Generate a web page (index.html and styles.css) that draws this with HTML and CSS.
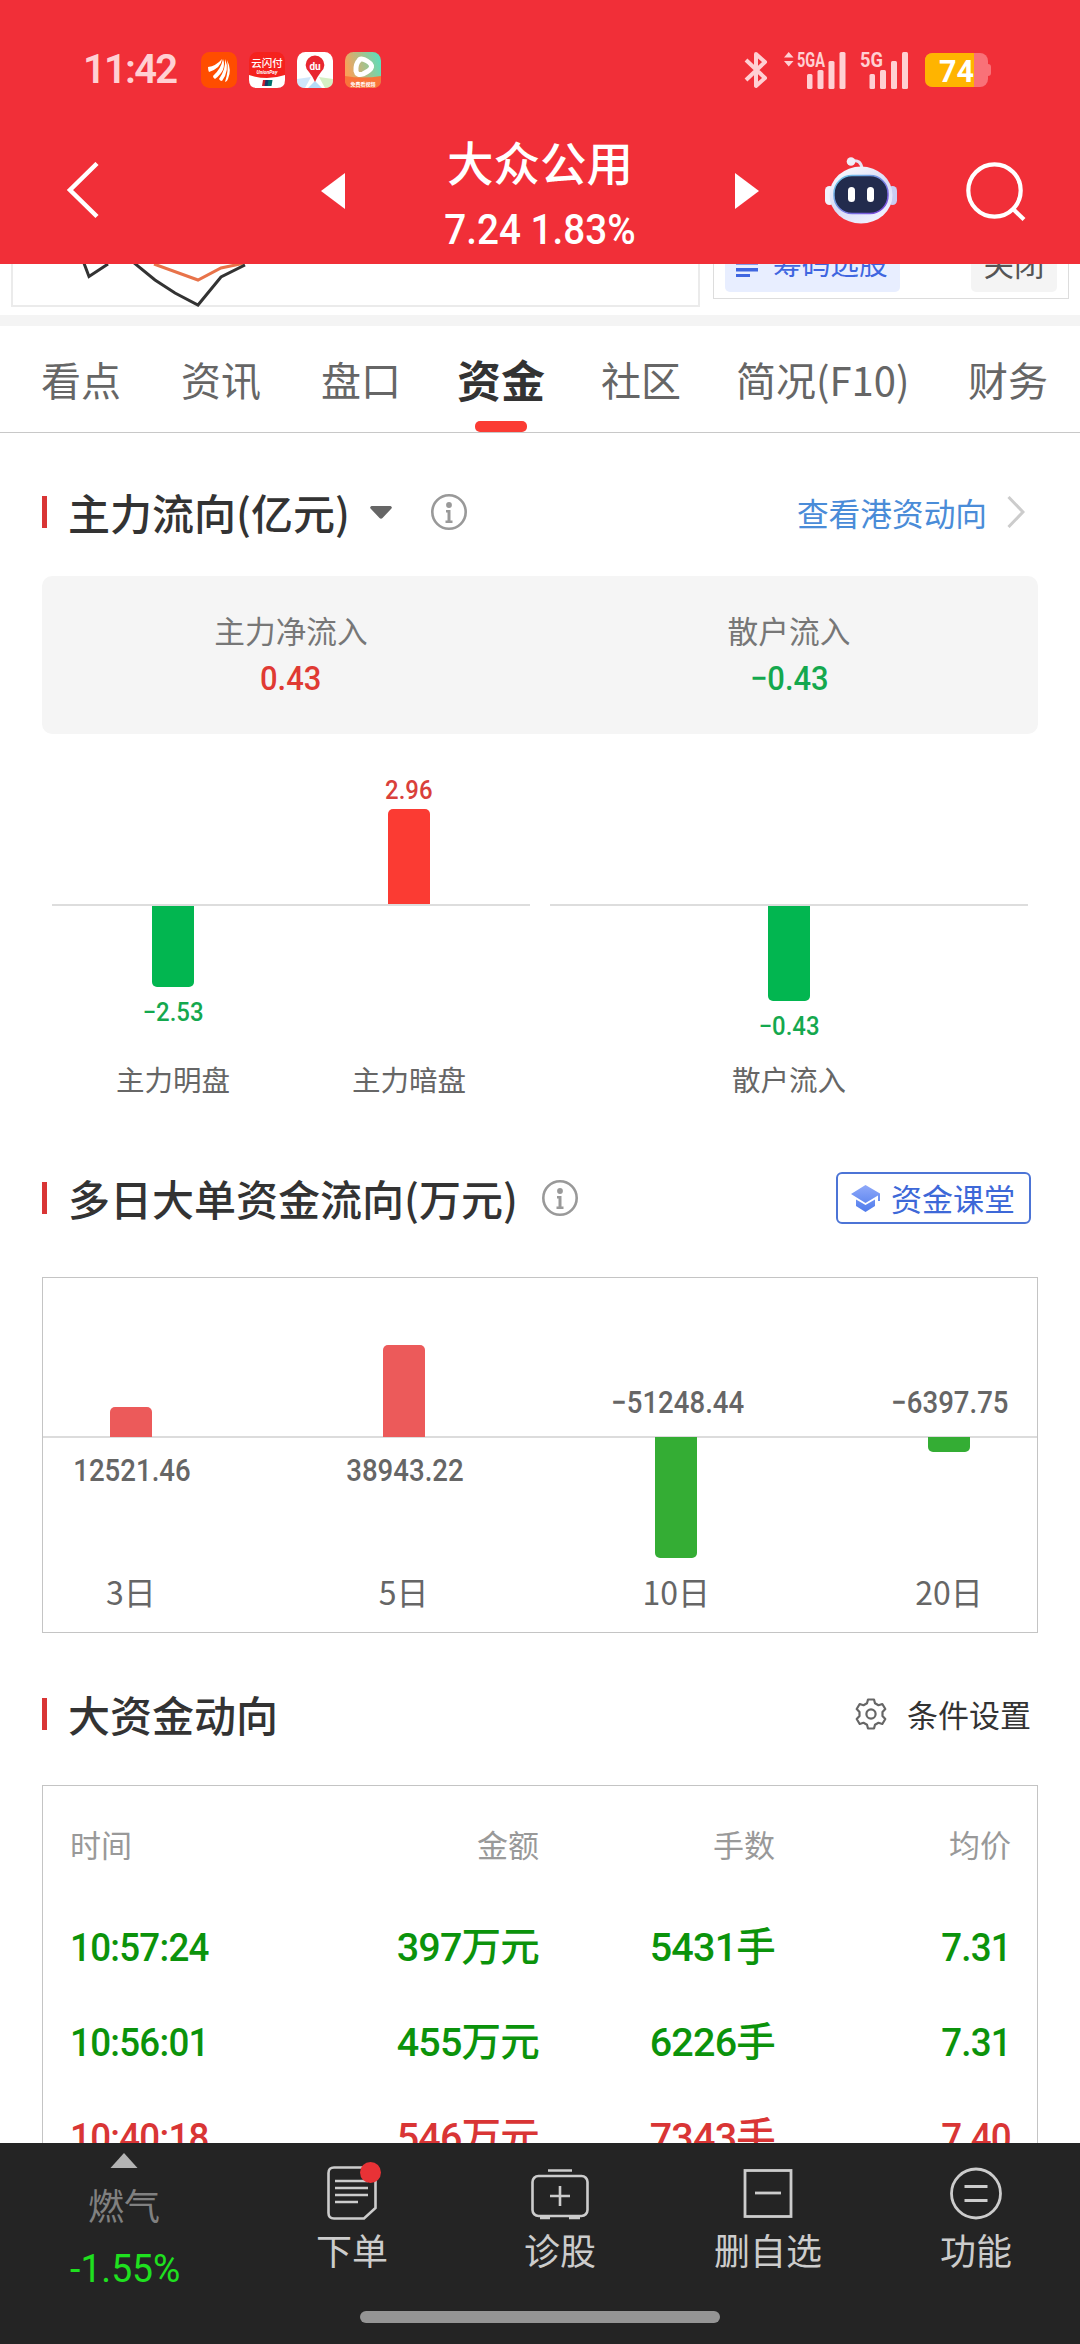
FILE: index.html
```html
<!DOCTYPE html>
<html lang="zh-CN">
<head>
<meta charset="utf-8">
<title>大众公用 - 资金</title>
<link rel="stylesheet" href="styles.css">
</head>
<body>
<div class="app">
  <header class="header">
    <div class="status">
      <span class="clock">11:42</span>
      <div class="apps">
        <svg width="36" height="36" viewBox="0 0 36 36"><rect width="36" height="36" rx="8.5" fill="#ff4d00"/><g fill="#fff"><path d="M7 15Q15 14 21 7Q20 16 8 20Q7 18 7 15Z"/><path d="M12 24Q20 17 22 7Q26 18 14 27Q12 26 12 24Z"/><path d="M18 27Q25 17 24 7Q29 18 21 29Q19 29 18 27Z"/><path d="M24 30Q28 18 26 8Q31 18 27 27Q26 30 24 30Z"/></g></svg>
        <svg width="36" height="36" viewBox="0 0 36 36"><rect width="36" height="36" rx="8.5" fill="#f5221e"/><path d="M0 23Q18 29 36 23V28Q36 36 28 36H8Q0 36 0 28Z" fill="#fff"/><text x="18" y="15" class="t-union">云闪付</text><text x="18" y="22" class="t-pay">UnionPay</text><path d="M14 28h4l-1 6h-4z" fill="#c8202f"/><path d="M16.500 28h4l-1 6h-4z" fill="#123a6b"/><path d="M19.500 28h4l-1 6h-4z" fill="#00706b"/></svg>
        <svg width="36" height="36" viewBox="0 0 36 36"><rect width="36" height="36" rx="8.500" fill="#fff"/><path d="M0 27L14 25L8 36Q0 36 0 28Z" fill="#cfe6fb"/><path d="M36 27L22 25L28 36Q36 36 36 28Z" fill="#d5efc4"/><path d="M18 29L25 36H11Z" fill="#b5dcf8"/><path d="M18 30Q16 25 12 20A9.300 9.300 0 1 1 24 20Q20 25 18 30Z" fill="#e8262f"/><text x="18" y="18" class="t-du">du</text></svg>
        <svg width="36" height="36" viewBox="0 0 36 36"><defs><linearGradient id="vid" x1="0" y1="0.300" x2="1" y2="0"><stop offset="0" stop-color="#f7a25a"/><stop offset=".9" stop-color="#62dcb8"/></linearGradient></defs><rect width="36" height="36" rx="8.500" fill="url(#vid)"/><path d="M0 24Q18 27 36 24V28Q36 36 28 36H8Q0 36 0 28Z" fill="#f9743a"/><path d="M14 8.500Q15 6 19 7.500Q27 11 26.500 15Q26 18 18 22Q12 24 11 19Q10.500 12 14 8.500Z" fill="none" stroke="#fff" stroke-width="5" stroke-linejoin="round"/><text x="18" y="34" class="t-free">免费看视频</text></svg>
      </div>
      <div class="signals">
        <svg width="24" height="38" viewBox="0 0 24 38" fill="none" stroke="#ffd0d3" stroke-width="4" stroke-linejoin="round"><path d="M2 9L21 27L12 35V3L21 11L2 29"/></svg>
        <svg class="net-a" width="63" height="38" viewBox="0 0 63 38" fill="#ffd0d3"><path d="M4.700 1L9.500 6.500H0ZM4.700 15.500L0 10H9.500Z"/><text x="13" y="16" textLength="28" lengthAdjust="spacingAndGlyphs" class="t-net">5GA</text><rect x="23" y="23" width="5.500" height="15" rx="1.500"/><rect x="33.500" y="19" width="6" height="19" rx="1.500"/><rect x="44.500" y="10" width="6" height="28" rx="1.500"/><rect x="55.500" y="1" width="6" height="37" rx="1.500"/></svg>
        <svg class="net-b" width="49" height="38" viewBox="0 0 49 38" fill="#ffd0d3"><text x="0" y="16" textLength="23" lengthAdjust="spacingAndGlyphs" class="t-net">5G</text><rect x="9.500" y="23" width="5.500" height="15" rx="1.500"/><rect x="20" y="19" width="6" height="19" rx="1.500"/><rect x="31" y="10" width="6" height="28" rx="1.500"/><rect x="42" y="1" width="6" height="37" rx="1.500"/></svg>
        <svg class="battery" width="67" height="36" viewBox="0 0 67 36"><rect x="0" y="1" width="63" height="34" rx="8" fill="#f97178"/><path d="M63 12q3 0 3 3v6q0 3-3 3z" fill="#f97178"/><path d="M49 1H8Q0 1 0 9V27Q0 35 8 35H49Z" fill="#ffb400"/><text x="14" y="29.500" textLength="35" lengthAdjust="spacingAndGlyphs" class="t-bat">74</text></svg>
      </div>
    </div>
    <div class="titlebar">
      <svg width="34" height="58" viewBox="0 0 34 58"><path d="M31 1.500L4 28L31 54.500" fill="none" stroke="#fff" stroke-width="4.500"/></svg>
      <svg class="prev" width="24" height="36" viewBox="0 0 24 36"><path d="M24 0V36L0 18Z" fill="#fff"/></svg>
      <div class="stock">
        <h1 class="stock-name">大众公用</h1>
        <div class="stock-price"><span class="num narrow">7.24 1.83%</span></div>
      </div>
      <svg width="24" height="36" viewBox="0 0 24 36"><path d="M0 0V36L24 18Z" fill="#fff"/></svg>
      <svg class="robot" width="72" height="68" viewBox="0 0 72 68">
        <defs><linearGradient id="head" x1="0" y1="0" x2=".6" y2="1"><stop offset="0" stop-color="#fff"/><stop offset=".6" stop-color="#d9dbf5"/><stop offset="1" stop-color="#eef0ff"/></linearGradient><linearGradient id="rim" x1="0" y1="0" x2="1" y2="1"><stop offset="0" stop-color="#6fd0e8"/><stop offset="1" stop-color="#7a3ddb"/></linearGradient></defs>
        <path d="M27 4Q36 2 37 12" fill="none" stroke="#e6e2f2" stroke-width="3"/><circle cx="26" cy="4.500" r="4.300" fill="#f0eef8"/>
        <rect x="0" y="29" width="9" height="19" rx="4.500" fill="#f2f2fc"/><rect x="63" y="29" width="9" height="19" rx="4.500" fill="#c9cdf2"/>
        <ellipse cx="36" cy="38" rx="31.500" ry="28.500" fill="url(#head)"/>
        <rect x="9" y="18.500" width="54" height="38" rx="18" fill="#222b4d" stroke="url(#rim)" stroke-width="1.500"/>
        <rect x="23" y="30" width="7" height="15" rx="3.500" fill="#fff"/><rect x="42" y="30" width="7" height="15" rx="3.500" fill="#fff"/>
      </svg>
      <svg class="search" width="62" height="60" viewBox="0 0 62 60" fill="none" stroke="#fff" stroke-width="4.200"><circle cx="28.500" cy="29.500" r="26.200"/><path d="M47 48L58 58.500"/></svg>
    </div>
  </header>

  <main class="content">
    <section class="strip">
      <div class="mini-chart">
        <svg width="300" height="43" viewBox="13 0 300 43" fill="none" stroke-width="3"><path d="M154 0L198 16L221 4L240 0L250 -3" stroke="#e8734a"/><path d="M82 -6L89 12.500L108 0M133 -2L155 16L175 29L198 41L221 13L245 1" stroke="#333"/></svg>
      </div>
      <div class="chips">
        <span class="chip chip-blue"><svg width="22" height="15" viewBox="0 0 22 15" fill="#3f66e0"><rect width="22" height="3" opacity=".6"/><rect y="6" width="22" height="3.500"/><rect y="12" width="14" height="3"/></svg>筹码选股</span>
        <span class="chip chip-gray">关闭</span>
      </div>
    </section>

    <nav class="tabs">
      <span>看点</span><span>资讯</span><span>盘口</span><span class="active">资金</span><span>社区</span><span>简况(F10)</span><span>财务</span>
    </nav>

    <section>
      <div class="head head-main">
        <h2>主力流向(亿元)</h2>
        <svg class="caret" width="22" height="13" viewBox="0 0 22 13"><path d="M1.500 0H20.500Q23 1 21 3L12.500 12Q11 13.500 9.500 12L1 3Q-1 1 1.500 0Z" fill="#666"/></svg>
        <svg class="info info-far" width="36" height="36" viewBox="0 0 36 36"><circle cx="18" cy="18" r="16.700" fill="none" stroke="#999" stroke-width="2.600"/><circle cx="18" cy="11" r="2.900" fill="#999"/><path d="M15 16h4.500v10.500h2v2.500h-7v-2.500h2v-8H15z" fill="#999"/></svg>
        <a class="link">查看港资动向<svg width="18" height="32" viewBox="0 0 18 32"><path d="M1.500 1L16 16L1.500 31" fill="none" stroke="#ccc" stroke-width="3"/></svg></a>
      </div>
      <div class="summary">
        <div class="sum-cell"><span>主力净流入</span><b class="num red">0.43</b></div>
        <div class="sum-cell"><span>散户流入</span><b class="num green">−0.43</b></div>
      </div>
      <div class="flow">
        <div class="flow-group">
          <div class="flow-col">
            <div class="up"></div>
            <div class="down"><i class="bar" style="height:81px"></i><b class="num">−2.53</b></div>
            <span>主力明盘</span>
          </div>
          <div class="flow-col">
            <div class="up"><b class="num">2.96</b><i class="bar" style="height:95px"></i></div>
            <div class="down"></div>
            <span>主力暗盘</span>
          </div>
        </div>
        <div class="flow-group">
          <div class="flow-col">
            <div class="up"></div>
            <div class="down"><i class="bar" style="height:95px"></i><b class="num">−0.43</b></div>
            <span>散户流入</span>
          </div>
        </div>
      </div>
    </section>

    <section>
      <div class="head head-days">
        <h2>多日大单资金流向(万元)</h2>
        <svg class="info" width="36" height="36" viewBox="0 0 36 36"><circle cx="18" cy="18" r="16.700" fill="none" stroke="#999" stroke-width="2.600"/><circle cx="18" cy="11" r="2.900" fill="#999"/><path d="M15 16h4.500v10.500h2v2.500h-7v-2.500h2v-8H15z" fill="#999"/></svg>
        <a class="class-btn"><svg width="29" height="27" viewBox="0 0 29 27"><defs><linearGradient id="hat" x1="0" y1="0" x2="0" y2="1"><stop offset="0" stop-color="#8fa9f9"/><stop offset="1" stop-color="#4f7bec"/></linearGradient></defs><path d="M14.500 0L29 8.500V16H27V10.500L14.500 18L0 9ZM5 14.500L14.500 20L24 14.500V21L14.500 27L5 21Z" fill="url(#hat)"/></svg>资金课堂</a>
      </div>
      <div class="days">
        <div class="day"><div class="up"><i class="bar" style="height:30px"></i></div><div class="down"><b class="num">12521.46</b></div><span>3日</span></div>
        <div class="day"><div class="up"><i class="bar" style="height:92px"></i></div><div class="down"><b class="num">38943.22</b></div><span>5日</span></div>
        <div class="day"><div class="up"><b class="num">−51248.44</b></div><div class="down"><i class="bar" style="height:121px"></i></div><span>10日</span></div>
        <div class="day"><div class="up"><b class="num">−6397.75</b></div><div class="down"><i class="bar" style="height:15px"></i></div><span>20日</span></div>
      </div>
    </section>

    <section>
      <div class="head head-big">
        <h2>大资金动向</h2>
        <a class="settings"><svg width="32" height="32" viewBox="0 0 32 32" fill="none" stroke="#666" stroke-width="2.200" stroke-linejoin="round"><path d="M13 1.500H19L20 5.200L23.500 7.200L27.300 6L30.300 11L27.500 14V18L30.300 21L27.300 26L23.500 24.800L20 26.800L19 30.500H13L12 26.800L8.500 24.800L4.700 26L1.700 21L4.500 18V14L1.700 11L4.700 6L8.500 7.200L12 5.200Z"/><circle cx="16" cy="16" r="4.600"/></svg>条件设置</a>
      </div>
      <div class="trades">
        <div class="row row-head"><span>时间</span><span>金额</span><span>手数</span><span>均价</span></div>
        <div class="row sell"><span class="time">10:57:24</span><span>397万元</span><span>5431手</span><span class="price">7.31</span></div>
        <div class="row sell"><span class="time">10:56:01</span><span>455万元</span><span>6226手</span><span class="price">7.31</span></div>
        <div class="row buy"><span class="time">10:40:18</span><span>546万元</span><span>7343手</span><span class="price">7.40</span></div>
      </div>
    </section>
  </main>

  <footer class="footer">
    <div class="dock">
      <div class="ticker"><svg width="28" height="15" viewBox="0 0 28 15"><path d="M14 0L27.500 15H.5Z" fill="#b3b3b3"/></svg><span>燃气</span><b>-1.55%</b></div>
      <div class="dock-item">
        <div class="order-icon"><svg width="50" height="54" viewBox="0 0 50 54" fill="none" stroke="#ccc" stroke-width="2.600"><path d="M7 1.500H43Q48.500 1.500 48.500 7V42L37 52.500H7Q1.500 52.500 1.500 47V7Q1.500 1.500 7 1.500Z"/><path d="M8 15H41M8 22H41M8 29H41M8 36H31"/></svg><i class="dot"></i></div>
        <span>下单</span>
      </div>
      <div class="dock-item"><svg width="58" height="54" viewBox="0 0 58 54" fill="none" stroke="#ccc" stroke-width="2.600"><rect x="1.500" y="10" width="55" height="40" rx="6"/><path d="M17 4.500H41M19 30H39M29 20V40M9 52H19M38 52H49"/></svg><span>诊股</span></div>
      <div class="dock-item"><svg width="50" height="54" viewBox="0 0 50 54" fill="none" stroke="#ccc" stroke-width="2.800"><rect x="2" y="4.500" width="46" height="46"/><path d="M12 27H38"/></svg><span>删自选</span></div>
      <div class="dock-item"><svg width="54" height="54" viewBox="0 0 54 54" fill="none" stroke="#ccc" stroke-width="2.800"><circle cx="27" cy="27.500" r="24.500"/><path d="M15.500 20.500H38.500M15.500 34.500H38.500"/></svg><span>功能</span></div>
    </div>
    <div class="home-bar"></div>
  </footer>
</div>
</body>
</html>
```

FILE: styles.css
```css
* { box-sizing: border-box; }

body {
  margin: 0;
  background: #fff;
  font-family: "Noto Sans CJK SC", sans-serif;
  color: #333;
}

svg { display: block; flex: none; }
h1, h2, b { margin: 0; font-weight: 500; }

.app {
  width: 1080px;
  height: 2344px;
  display: flex;
  flex-direction: column;
  overflow: hidden;
}

.num {
  display: inline-block;
  font-family: Roboto, "Noto Sans CJK SC", sans-serif;
  font-weight: 500;
  white-space: nowrap;
}

/* Header */
.header { height: 264px; flex: none; background: #f12f38; color: #fff; }

.status {
  height: 124px;
  padding: 16px 88px 0 83px;
  display: flex;
  align-items: center;
}

.clock {
  width: 118px;
  font: 600 40px/40px Roboto, sans-serif;
  letter-spacing: -1.8px;
  color: #ffd0d3;
}

.apps { display: flex; gap: 12px; }
.signals { display: flex; align-items: center; margin-left: auto; }
.signals svg { overflow: visible; }
.net-a { margin-left: 16px; }
.net-b { margin-left: 13px; }
.battery { margin-left: 16px; }

.t-union { font: 500 10.500px "Noto Sans CJK SC", sans-serif; fill: #fff; text-anchor: middle; }
.t-pay { font: italic 700 5px Roboto, sans-serif; fill: #fff; text-anchor: middle; }
.t-du { font: 700 10px Roboto, sans-serif; fill: #fff; text-anchor: middle; }
.t-free { font: 700 5px "Noto Sans CJK SC", sans-serif; fill: #fff; text-anchor: middle; }
.t-net { font: 700 21px Roboto, sans-serif; }
.t-bat { font: 700 32px Roboto, sans-serif; fill: #fff; }

.titlebar {
  height: 140px;
  padding: 0 52px 6px 66px;
  display: flex;
  align-items: center;
}

.prev { margin-left: 221px; }
.stock { width: 390px; align-self: stretch; padding-top: 11px; text-align: center; }
.stock-name { font-size: 46.500px; line-height: 51px; }
.stock-price { margin-top: 20px; font-size: 42px; line-height: 40px; }
.narrow { transform: scaleX(.92); }
.robot { margin: 0 69px 0 66px; }

/* Scrolled-away strip */
.content { height: 1879px; flex: none; overflow: hidden; }

.strip { height: 51px; padding-left: 11px; display: flex; gap: 13px; overflow: hidden; }
.mini-chart { width: 689px; height: 43px; border: 2px solid #ebebeb; border-top: 0; }

.chips {
  width: 356px;
  height: 35px;
  padding: 0 11px 6px;
  border: 1px solid #ddd;
  border-top: 0;
  display: flex;
  justify-content: space-between;
  align-items: flex-end;
}

.chip { height: 56px; line-height: 50px; padding-bottom: 3px; border-radius: 5px; display: flex; align-items: center; }
.chip-blue { width: 175px; padding-left: 11px; gap: 15px; background: #e8eeff; color: #3f66e0; font-size: 28.700px; }
.chip-blue svg { margin-top: 14px; }
.chip-gray { width: 86px; justify-content: center; background: #f4f4f4; color: #555; font-size: 30.500px; }

/* Tabs */
.tabs {
  height: 118px;
  padding: 0 0 0 41px;
  border-top: 11px solid #f4f4f4;
  border-bottom: 1px solid #c8c8c8;
  display: grid;
  grid-template-columns: 140px 140px 136px 144px 135px 232px 1fr;
  font-size: 40px;
  line-height: 106px;
  color: #666;
  white-space: nowrap;
}

.tabs span { height: 106px; }
.tabs .active { position: relative; width: 88px; font-size: 44px; font-weight: 700; color: #333; }
.tabs .active::after {
  content: "";
  position: absolute;
  left: 18px;
  bottom: 0;
  width: 52px;
  height: 11px;
  border-radius: 5px;
  background: #fb3b33;
}

/* Section headings */
.head { height: 60px; margin: 0 49px 0 42px; display: flex; align-items: center; }
.head::before { content: ""; width: 5px; height: 32px; background: #d93535; }
.head h2 { margin-left: 21px; font-size: 42px; line-height: 56px; }
.head-main { margin-top: 49px; }
.caret { margin-left: 20px; }
.info { margin-left: 24px; }
.head .info-far { margin-left: 39px; }

.link, .class-btn, .settings { margin-left: auto; display: flex; align-items: center; line-height: 48px; }
.link { margin-right: 6px; gap: 20px; font-size: 31.700px; color: #4a8cd8; }

.class-btn {
  height: 52px;
  width: 195px;
  padding-left: 13px;
  gap: 11px;
  border: 2px solid #4c74d6;
  border-radius: 6px;
  font-size: 31px;
  line-height: 44px;
  color: #3d68d8;
}

.settings { gap: 20px; font-size: 31px; }

/* Main flow summary */
.summary {
  height: 158px;
  margin: 34px 42px 0;
  padding-top: 33px;
  display: grid;
  grid-template-columns: 1fr 1fr;
  border-radius: 10px;
  background: #f5f5f5;
  text-align: center;
}

.sum-cell { display: flex; flex-direction: column; align-items: center; font-size: 30.700px; line-height: 42px; color: #777; }
.sum-cell .num { margin-top: 7px; font-size: 34px; line-height: 40px; transform: scaleX(.91); }
.sum-cell .red { color: #e03a33; }
.sum-cell .green { color: #14a84e; }

/* Main flow chart */
.flow { margin: 20px 52px 0; display: flex; gap: 20px; }
.flow-group { flex: 1; display: flex; justify-content: center; background: linear-gradient(#ddd, #ddd) 0 150px / 100% 2px no-repeat; }
.flow-col { width: 236px; display: flex; flex-direction: column; align-items: center; font-size: 28.500px; line-height: 40px; color: #666; }
.flow-col .up { height: 150px; display: flex; flex-direction: column; justify-content: flex-end; align-items: center; color: #d9403a; }
.flow-col .down { height: 153px; margin-top: 2px; display: flex; flex-direction: column; align-items: center; color: #14a84e; }
.flow .num { font-size: 26px; line-height: 38px; transform: scaleX(.92); }
.flow .down .num { margin-top: 6px; }
.bar { display: block; width: 42px; flex: none; }
.up .bar { border-radius: 5px 5px 0 0; }
.down .bar { border-radius: 0 0 5px 5px; }
.flow .up .bar { background: #fb3b33; }
.flow .down .bar { background: #02b650; }

/* Multi-day chart */
.head-days { margin-top: 69px; }

.days {
  height: 356px;
  margin: 49px 42px 0;
  border: 1px solid #c4c4c4;
  display: flex;
  justify-content: space-between;
  background: linear-gradient(#dcdcdc, #dcdcdc) 0 158px / 100% 2px no-repeat;
}

.day { width: 176px; display: flex; flex-direction: column; align-items: center; font-size: 32px; color: #666; }
.day .up { height: 159px; display: flex; flex-direction: column; justify-content: flex-end; align-items: center; }
.day .down { height: 130px; display: flex; flex-direction: column; align-items: center; }
.day > span { line-height: 49px; }
.day .num { font-size: 31px; line-height: 36px; transform: translateX(1px) scaleX(.89); }
.day .up .num { margin-bottom: 16px; }
.day .down .num { margin-top: 16px; }
.days .up .bar { background: #ec5a5a; }
.days .down .bar { background: #34ad34; }

/* Large trades */
.head-big { margin-top: 51px; }

.trades { height: 500px; margin: 41px 42px 0; border: 1px solid #c4c4c4; padding: 13px 26px 0 27px; }
.row {
  height: 95px;
  display: grid;
  grid-template-columns: 233px 236px 236px 1fr;
  align-items: center;
  font: 500 39.500px/95px Roboto, "Noto Sans CJK SC", sans-serif;
  letter-spacing: -.8px;
  text-align: right;
}
.row span:first-child { text-align: left; }
.row-head { height: 101px; align-items: start; font: 400 31px/89px "Noto Sans CJK SC", sans-serif; letter-spacing: 0; color: #999; }
.time { transform: scaleX(.93); transform-origin: left; }
.price { transform: scaleX(.93); transform-origin: right; }
.sell { color: #0b930b; }
.buy { color: #d93535; }

/* Bottom dock */
.footer { height: 201px; flex: none; background: #242424; }
.dock { height: 168px; display: grid; grid-template-columns: 248px repeat(4, 1fr); }
.ticker { padding-top: 10px; display: flex; flex-direction: column; align-items: center; }
.ticker span { margin-top: 11px; font-size: 36px; line-height: 50px; color: #808080; }
.ticker b { margin: 18px 0 0 2px; font: 400 38px/44px Roboto, sans-serif; transform: scaleX(.98); color: #1fe01f; }
.dock-item { padding-top: 23px; display: flex; flex-direction: column; align-items: center; font-size: 36px; line-height: 50px; color: #ccc; }
.dock-item span { margin-top: 4px; }
.order-icon { position: relative; }
.dot { position: absolute; right: -4px; top: -4px; width: 21px; height: 21px; border-radius: 50%; background: #e83236; }
.home-bar { width: 360px; height: 12px; margin: 0 auto; border-radius: 6px; background: #959595; }
```
